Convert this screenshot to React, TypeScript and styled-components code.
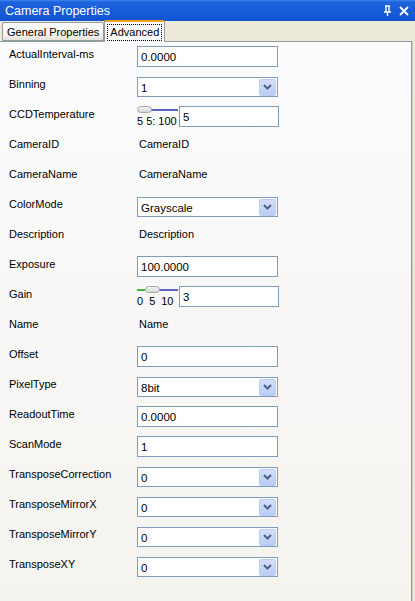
import React from "react";
import styled, { createGlobalStyle } from "styled-components";

const Global = createGlobalStyle`
  html, body { margin: 0; padding: 0; }
  body {
    width: 415px;
    height: 601px;
    overflow: hidden;
    background: #ece9d8;
    font-family: "Liberation Sans", "DejaVu Sans", Arial, sans-serif;
    font-size: 11px;
    color: #000;
  }
`;

const Window = styled.div`
  width: 415px;
  height: 601px;
  display: flex;
  flex-direction: column;
  background: #ece9d8;
`;

const TitleBar = styled.div`
  height: 21px;
  flex: none;
  display: flex;
  align-items: center;
  padding: 0 5px;
  background: linear-gradient(#3d86f2 0px, #1f63dc 2px, #165ad6 60%, #0f54d0 100%);
  color: #fff;
  font-size: 12.5px;
`;

const TitleText = styled.div`
  flex: 1;
  padding-top: 1px;
`;

const TitleButtons = styled.div`
  display: flex;
  gap: 7px;
  align-items: center;
  padding-right: 1px;
`;

const TabStrip = styled.div`
  height: 20px;
  flex: none;
  display: flex;
  align-items: flex-end;
  padding-left: 2px;
  position: relative;
  z-index: 1;
`;

const Tab = styled.div<{ $active?: boolean }>`
  box-sizing: border-box;
  display: flex;
  align-items: center;
  justify-content: center;
  height: ${(p) => (p.$active ? "22px" : "19px")};
  margin-bottom: ${(p) => (p.$active ? "-1px" : "0")};
  padding: 0 ${(p) => (p.$active ? "2px" : "4px")};
  border: 1px solid #919b9c;
  border-bottom: ${(p) => (p.$active ? "none" : "1px solid #919b9c")};
  border-top: ${(p) => (p.$active ? "2px solid #f4a21c" : "1px solid #919b9c")};
  border-radius: 2px 2px 0 0;
  background: ${(p) =>
    p.$active ? "#fcfcfe" : "linear-gradient(#ffffff, #f3f3ef 70%, #e4e2d8)"};
  font-size: 11px;
  white-space: nowrap;
`;

const FocusRect = styled.span`
  border: 1px dotted #000;
  padding: 0 2px 1px;
  line-height: 14px;
`;

const Panel = styled.div`
  flex: 1;
  margin-right: 3px;
  border-top: 1px solid #919b9c;
  border-right: 1px solid #919b9c;
  box-shadow: 1px 0 0 #d0cec3;
  background: linear-gradient(#fcfcfe, #f4f3ee);
  padding: 2px 0 0 9px;
  display: flex;
  flex-direction: column;
`;

const Row = styled.div`
  height: 30px;
  display: grid;
  grid-template-columns: 128px 141px;
  align-items: start;
`;

const Label = styled.div`
  padding-top: 3px;
  line-height: 14px;
`;

const StaticValue = styled.div`
  padding-top: 3px;
  padding-left: 2px;
  line-height: 14px;
`;

const TextBox = styled.div`
  box-sizing: border-box;
  margin-top: 2px;
  height: 21px;
  border: 1px solid #7f9db9;
  background: #fff;
  padding: 4px 0 0 3px;
  line-height: 13px;
  font-size: 11.5px;
`;

const SelectBox = styled(TextBox)`
  margin-top: 3px;
  height: 20px;
  display: flex;
  justify-content: space-between;
  padding-right: 1px;
  padding-top: 0;
  padding-bottom: 0;
  align-items: center;
`;

const SelectText = styled.span`
  padding-top: 2px;
`;

const DropButton = styled.div`
  box-sizing: border-box;
  width: 17px;
  height: 17px;
  border: 1px solid #bacbf6;
  border-radius: 2px;
  background: linear-gradient(#d4defb, #b9cbf7);
  display: flex;
  align-items: center;
  justify-content: center;
`;

const SliderCell = styled.div`
  display: flex;
  align-items: flex-start;
`;

const Slider = styled.div`
  width: 42px;
  flex: none;
  display: flex;
  flex-direction: column;
  padding-top: 2px;
`;

const Track = styled.div`
  position: relative;
  height: 8px;
  width: 41px;
`;

const TrackLine = styled.div<{ $color: string }>`
  position: absolute;
  top: 3px;
  height: 2px;
  background: ${(p) => p.$color};
`;

const Thumb = styled.div`
  position: absolute;
  top: 0;
  box-sizing: border-box;
  width: 15px;
  height: 7px;
  border-radius: 4px;
  border: 1px solid #a9a9a9;
  background: linear-gradient(#f4f4f4, #d6d6d6);
`;

const Ticks = styled.div<{ $gap: number }>`
  display: flex;
  gap: ${(p) => p.$gap}px;
  font-size: 11px;
  line-height: 12px;
  padding-top: 1px;
  white-space: nowrap;
`;

const SliderBox = styled(TextBox)`
  width: 100px;
  flex: none;
`;

const Pin = () => (
  <svg width="9" height="11" viewBox="0 0 9 11">
    <path d="M2 1h5M3 1v6M6 1v6M1 7h7M4.5 7v4" stroke="#fff" strokeWidth="1.4" fill="none" />
  </svg>
);

const Close = () => (
  <svg width="10" height="10" viewBox="0 0 10 10">
    <path d="M1 1L9 9M9 1L1 9" stroke="#fff" strokeWidth="1.8" />
  </svg>
);

const Chevron = () => (
  <svg width="9" height="6" viewBox="0 0 9 6">
    <path d="M1 1L4.5 4.5L8 1" stroke="#4d6185" strokeWidth="2" fill="none" />
  </svg>
);

type Prop =
  | { name: string; kind: "text"; value: string }
  | { name: string; kind: "select"; value: string }
  | { name: string; kind: "static"; value: string }
  | { name: string; kind: "slider"; value: string; ticks: string[]; gap: number; thumb: number; green: number };

const props: Prop[] = [
  { name: "ActualInterval-ms", kind: "text", value: "0.0000" },
  { name: "Binning", kind: "select", value: "1" },
  { name: "CCDTemperature", kind: "slider", value: "5", ticks: ["5 5:", "100"], gap: 3, thumb: 0, green: 0 },
  { name: "CameraID", kind: "static", value: "CameraID" },
  { name: "CameraName", kind: "static", value: "CameraName" },
  { name: "ColorMode", kind: "select", value: "Grayscale" },
  { name: "Description", kind: "static", value: "Description" },
  { name: "Exposure", kind: "text", value: "100.0000" },
  { name: "Gain", kind: "slider", value: "3", ticks: ["0", "5", "10"], gap: 6, thumb: 8, green: 8 },
  { name: "Name", kind: "static", value: "Name" },
  { name: "Offset", kind: "text", value: "0" },
  { name: "PixelType", kind: "select", value: "8bit" },
  { name: "ReadoutTime", kind: "text", value: "0.0000" },
  { name: "ScanMode", kind: "text", value: "1" },
  { name: "TransposeCorrection", kind: "select", value: "0" },
  { name: "TransposeMirrorX", kind: "select", value: "0" },
  { name: "TransposeMirrorY", kind: "select", value: "0" },
  { name: "TransposeXY", kind: "select", value: "0" },
];

const Value = ({ p }: { p: Prop }) => {
  switch (p.kind) {
    case "text":
      return <TextBox>{p.value}</TextBox>;
    case "select":
      return (
        <SelectBox>
          <SelectText>{p.value}</SelectText>
          <DropButton>
            <Chevron />
          </DropButton>
        </SelectBox>
      );
    case "static":
      return <StaticValue>{p.value}</StaticValue>;
    case "slider":
      return (
        <SliderCell>
          <Slider>
            <Track>
              {p.green > 0 && <TrackLine $color="#3fb93a" style={{ left: 0, width: p.green }} />}
              <TrackLine $color="#5a64c8" style={{ left: p.thumb + 14, right: 0 }} />
              <Thumb style={{ left: p.thumb }} />
            </Track>
            <Ticks $gap={p.gap}>
              {p.ticks.map((t, i) => (
                <span key={i}>{t}</span>
              ))}
            </Ticks>
          </Slider>
          <SliderBox>{p.value}</SliderBox>
        </SliderCell>
      );
  }
};

export default function App() {
  return (
    <>
      <Global />
      <Window>
        <TitleBar>
          <TitleText>Camera Properties</TitleText>
          <TitleButtons>
            <Pin />
            <Close />
          </TitleButtons>
        </TitleBar>
        <TabStrip>
          <Tab>General Properties</Tab>
          <Tab $active>
            <FocusRect>Advanced</FocusRect>
          </Tab>
        </TabStrip>
        <Panel>
          {props.map((p) => (
            <Row key={p.name}>
              <Label>{p.name}</Label>
              <Value p={p} />
            </Row>
          ))}
        </Panel>
      </Window>
    </>
  );
}
